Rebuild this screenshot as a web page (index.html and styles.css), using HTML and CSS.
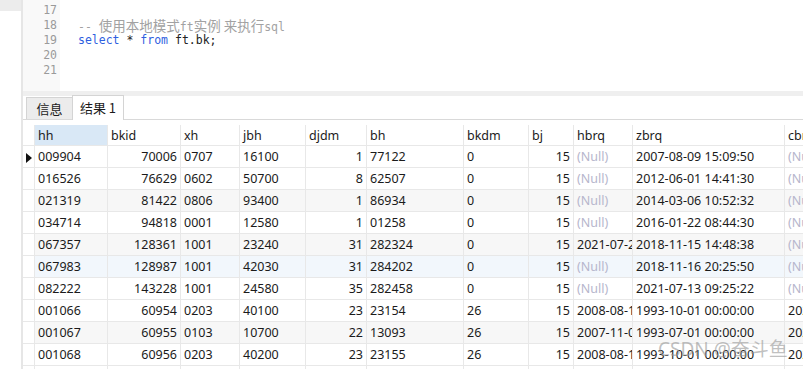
FILE: index.html
```html
<!DOCTYPE html>
<html lang="zh-CN">
<head>
    <meta charset="UTF-8">
    <meta name="viewport" content="width=device-width, initial-scale=1.0">
    <title>查询结果</title>
    <link rel="stylesheet" href="styles.css">
</head>
<body>
    <div class="app">
        <div class="side">
            <div class="side-top"></div>
        </div>
        <div class="main">
            <div class="editor">
                <div class="gutter">
                    <div class="ln">17</div>
                    <div class="ln">18</div>
                    <div class="ln">19</div>
                    <div class="ln">20</div>
                    <div class="ln">21</div>
                </div>
                <div class="code">
                    <div class="line"></div>
                    <div class="line comment">-- <span class="cjk">使用本地模式</span>ft<span class="cjk">实例 来执行</span>sql</div>
                    <div class="line"><span class="kw">select</span> * <span class="kw">from</span> ft.bk;</div>
                    <div class="line"></div>
                    <div class="line"></div>
                </div>
            </div>
            <div class="split"></div>
            <div class="tabs">
                <div class="tab">信息</div>
                <div class="tab active">结果 1</div>
            </div>
            <div class="grid">
                <table class="result">
                    <colgroup>
                        <col style="width:12px">
                        <col style="width:73px">
                        <col style="width:73px">
                        <col style="width:59px">
                        <col style="width:66px">
                        <col style="width:61px">
                        <col style="width:97px">
                        <col style="width:65px">
                        <col style="width:45px">
                        <col style="width:59px">
                        <col style="width:152px">
                        <col style="width:60px">
                    </colgroup>
                    <thead>
                        <tr>
                            <th class="ind"></th>
                            <th class="sel">hh</th><th>bkid</th><th>xh</th><th>jbh</th><th>djdm</th><th>bh</th><th>bkdm</th><th>bj</th><th>hbrq</th><th>zbrq</th><th>cbrq</th>
                        </tr>
                    </thead>
                    <tbody>
                        <tr>
                            <td class="ind"><span class="ptr"></span></td>
                            <td>009904</td><td class="num">70006</td><td>0707</td><td>16100</td><td class="num">1</td><td>77122</td><td>0</td><td class="num">15</td><td class="null">(Null)</td><td>2007-08-09 15:09:50</td><td class="null">(Null)</td>
                        </tr>
                        <tr>
                            <td class="ind"></td>
                            <td>016526</td><td class="num">76629</td><td>0602</td><td>50700</td><td class="num">8</td><td>62507</td><td>0</td><td class="num">15</td><td class="null">(Null)</td><td>2012-06-01 14:41:30</td><td class="null">(Null)</td>
                        </tr>
                        <tr class="alt">
                            <td class="ind"></td>
                            <td>021319</td><td class="num">81422</td><td>0806</td><td>93400</td><td class="num">1</td><td>86934</td><td>0</td><td class="num">15</td><td class="null">(Null)</td><td>2014-03-06 10:52:32</td><td class="null">(Null)</td>
                        </tr>
                        <tr>
                            <td class="ind"></td>
                            <td>034714</td><td class="num">94818</td><td>0001</td><td>12580</td><td class="num">1</td><td>01258</td><td>0</td><td class="num">15</td><td class="null">(Null)</td><td>2016-01-22 08:44:30</td><td class="null">(Null)</td>
                        </tr>
                        <tr class="alt">
                            <td class="ind"></td>
                            <td>067357</td><td class="num">128361</td><td>1001</td><td>23240</td><td class="num">31</td><td>282324</td><td>0</td><td class="num">15</td><td>2021-07-21 10:12:05</td><td>2018-11-15 14:48:38</td><td class="null">(Null)</td>
                        </tr>
                        <tr class="hover">
                            <td class="ind"></td>
                            <td>067983</td><td class="num">128987</td><td>1001</td><td>42030</td><td class="num">31</td><td>284202</td><td>0</td><td class="num">15</td><td class="null">(Null)</td><td>2018-11-16 20:25:50</td><td class="null">(Null)</td>
                        </tr>
                        <tr>
                            <td class="ind"></td>
                            <td>082222</td><td class="num">143228</td><td>1001</td><td>24580</td><td class="num">35</td><td>282458</td><td>0</td><td class="num">15</td><td class="null">(Null)</td><td>2021-07-13 09:25:22</td><td class="null">(Null)</td>
                        </tr>
                        <tr>
                            <td class="ind"></td>
                            <td>001066</td><td class="num">60954</td><td>0203</td><td>40100</td><td class="num">23</td><td>23154</td><td>26</td><td class="num">15</td><td>2008-08-15 00:00:00</td><td>1993-10-01 00:00:00</td><td>2021-07-21</td>
                        </tr>
                        <tr class="alt">
                            <td class="ind"></td>
                            <td>001067</td><td class="num">60955</td><td>0103</td><td>10700</td><td class="num">22</td><td>13093</td><td>26</td><td class="num">15</td><td>2007-11-01 00:00:00</td><td>1993-07-01 00:00:00</td><td>2021-07-21</td>
                        </tr>
                        <tr>
                            <td class="ind"></td>
                            <td>001068</td><td class="num">60956</td><td>0203</td><td>40200</td><td class="num">23</td><td>23155</td><td>26</td><td class="num">15</td><td>2008-08-15 00:00:00</td><td>1993-10-01 00:00:00</td><td>2021-07-21</td>
                        </tr>
                        <tr>
                            <td class="ind"></td>
                            <td>001069</td><td class="num">60957</td><td>0203</td><td>40300</td><td class="num">23</td><td>23156</td><td>26</td><td class="num">15</td><td>2008-08-15 00:00:00</td><td>1993-10-01 00:00:00</td><td>2021-07-21</td>
                        </tr>
                    </tbody>
                </table>
                <div class="watermark">CSDN @奋斗鱼</div>
            </div>
        </div>
    </div>
</body>
</html>
```

FILE: styles.css
```css
body {
    margin: 0;
    background-color: #ffffff;
    color: #1b1b1b;
    font-family: 'Noto Sans', 'Noto Sans CJK SC', sans-serif;
    overflow: hidden;
}
.app {
    display: flex;
    width: 803px;
    height: 369px;
    overflow: hidden;
}
.side {
    width: 21px;
    flex-shrink: 0;
}
.side-top {
    height: 11px;
    background-color: #ececec;
}
.main {
    flex: 1;
    min-width: 0;
    border-left: 2px solid #e6e6e6;
    display: flex;
    flex-direction: column;
}
.editor {
    height: 91px;
    flex-shrink: 0;
    display: flex;
    font-family: 'DejaVu Sans Mono', monospace;
    font-size: 11.5px;
    line-height: 15px;
}
.gutter {
    width: 37px;
    box-sizing: border-box;
    padding: 3px 3px 0 0;
    background-color: #f9f9f9;
    color: #9a9a9a;
    text-align: right;
}
.code {
    padding: 3px 0 0 18px;
    color: #222222;
}
.line {
    height: 15px;
    white-space: pre;
}
.comment {
    color: #a2a2a2;
}
.cjk {
    font-family: 'Noto Sans CJK SC', sans-serif;
    font-size: 13.5px;
}
.kw {
    color: #2f5fe0;
}
.split {
    height: 5px;
    flex-shrink: 0;
    background-color: #efefef;
}
.tabs {
    height: 23px;
    flex-shrink: 0;
    display: flex;
    align-items: flex-end;
    padding-left: 3px;
    border-bottom: 1px solid #d9d9d9;
    font-family: 'Noto Sans CJK SC', sans-serif;
    font-size: 13px;
}
.tab {
    width: 47px;
    height: 22px;
    box-sizing: border-box;
    border: 1px solid #d4d4d4;
    border-bottom: none;
    background-color: #ececec;
    color: #1b1b1b;
    text-align: center;
    line-height: 21px;
}
.tab.active {
    width: 52px;
    height: 25px;
    margin-bottom: -1px;
    margin-left: -1px;
    background-color: #ffffff;
    line-height: 23px;
}
.grid {
    margin-top: 5px;
    position: relative;
    flex: 1;
    overflow: hidden;
}
.result {
    table-layout: fixed;
    border-collapse: separate;
    border-spacing: 0;
    width: 822px;
    font-size: 12.5px;
}
.result th,
.result td {
    box-sizing: border-box;
    padding: 0 3px;
    border-right: 1px solid #e8e8e8;
    border-bottom: 1px solid #e8e8e8;
    white-space: nowrap;
    overflow: hidden;
    text-align: left;
    font-weight: normal;
}
.result th {
    height: 21px;
}
.result td {
    height: 22px;
}
.result th.sel {
    background-color: #d9e8f6;
}
.result .ind {
    padding: 0;
    text-align: center;
}
.result .num {
    text-align: right;
}
.result .null {
    color: #b6b6cc;
}
.result tr.alt td {
    background-color: #f7f7f7;
}
.result tr.hover td {
    background-color: #f2f7fc;
}
.result tr td.ind {
    background-color: #ffffff;
}
.ptr {
    display: inline-block;
    width: 0;
    height: 0;
    border-top: 5px solid transparent;
    border-bottom: 5px solid transparent;
    border-left: 6px solid #111111;
    vertical-align: middle;
}
.watermark {
    position: absolute;
    left: 635px;
    top: 209px;
    font-family: 'Noto Sans', 'Noto Sans CJK SC', sans-serif;
    font-size: 19px;
    color: rgba(150, 150, 150, 0.6);
    white-space: nowrap;
}
```
